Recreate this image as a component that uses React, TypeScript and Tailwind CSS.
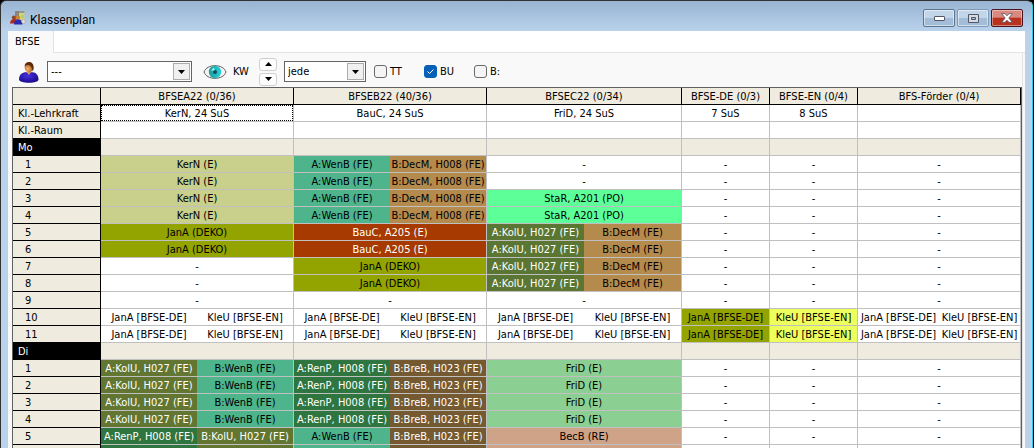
import { ReactNode } from 'react'

type Part = [text: string, color?: string]
type Cell = Part[]

const one = (text: string, color = ''): Cell => [[text, color]]

const dash = one('-')
const empty = one('')
const kern = one('KerN (E)', 'bg-[#c8d08b]')
const jana = one('JanA (DEKO)', 'bg-[#93a400]')
const bauc = one('BauC, A205 (E)', 'bg-[#a63a00] text-white')
const star = one('StaR, A201 (PO)', 'bg-[#5dff99]')
const frid = one('FriD (E)', 'bg-[#8bd092]')
const becb = one('BecB (RE)', 'bg-[#cfa388]')
const de = one('JanA [BFSE-DE]', 'bg-[#93a400]')
const en = one('KleU [BFSE-EN]', 'bg-[#ecff5d]')
const course: Cell = [['JanA [BFSE-DE]'], ['KleU [BFSE-EN]']]

const teal = 'bg-[#4db48c]'
const tan = 'bg-[#b48a4d]'
const moss = 'bg-[#5b7632] text-white'
const olive = 'bg-[#627632] text-white'
const forest = 'bg-[#2f7540] text-white'
const brown = 'bg-[#755930] text-white'

const wenDec: Cell = [['A:WenB (FE)', teal], ['B:DecM, H008 (FE)', tan]]
const kolDec: Cell = [['A:KolU, H027 (FE)', moss], ['B:DecM (FE)', tan]]
const kolWen: Cell = [['A:KolU, H027 (FE)', olive], ['B:WenB (FE)', teal]]
const renBre: Cell = [['A:RenP, H008 (FE)', forest], ['B:BreB, H023 (FE)', brown]]
const renKol: Cell = [['A:RenP, H008 (FE)', forest], ['B:KolU, H027 (FE)', olive]]
const wenBre: Cell = [['A:WenB (FE)', teal], ['B:BreB, H023 (FE)', brown]]

const classes = ['BFSEA22 (0/36)', 'BFSEB22 (40/36)', 'BFSEC22 (0/34)', 'BFSE-DE (0/3)', 'BFSE-EN (0/4)', 'BFS-Förder (0/4)']

const info: [string, Cell[]][] = [
  ['Kl.-Lehrkraft', [one('KerN, 24 SuS'), one('BauC, 24 SuS'), one('FriD, 24 SuS'), one('7 SuS'), one('8 SuS'), empty]],
  ['Kl.-Raum', [empty, empty, empty, empty, empty, empty]],
]

const days: { name: string; lessons: Cell[][] }[] = [
  {
    name: 'Mo',
    lessons: [
      [kern, wenDec, dash, dash, dash, dash],
      [kern, wenDec, dash, dash, dash, dash],
      [kern, wenDec, star, dash, dash, dash],
      [kern, wenDec, star, dash, dash, dash],
      [jana, bauc, kolDec, dash, dash, dash],
      [jana, bauc, kolDec, dash, dash, dash],
      [dash, jana, kolDec, dash, dash, dash],
      [dash, jana, kolDec, dash, dash, dash],
      [dash, dash, dash, dash, dash, dash],
      [course, course, course, de, en, course],
      [course, course, course, de, en, course],
    ],
  },
  {
    name: 'Di',
    lessons: [
      [kolWen, renBre, frid, dash, dash, dash],
      [kolWen, renBre, frid, dash, dash, dash],
      [kolWen, renBre, frid, dash, dash, dash],
      [kolWen, renBre, frid, dash, dash, dash],
      [renKol, wenBre, becb, dash, dash, dash],
    ],
  },
]

// colours only, the row that peeks out under the last lesson
const nextRow: Cell[] = [
  [['', forest], ['', olive]],
  [['', teal], ['', brown]],
  one('', 'bg-[#cfa388]'),
  empty,
  empty,
  empty,
]

function PlanCell({ cell, focused = false }: { cell: Cell; focused?: boolean }) {
  return (
    <td className="h-[17px] border-r border-b border-[#c0c0c0] bg-white p-0">
      <div className={focused ? 'flex h-4 outline-1 -outline-offset-1 outline-dotted outline-black' : 'flex h-4'}>
        {cell.map(([text, color], i) => (
          <span key={i} className={`min-w-0 flex-1 whitespace-nowrap pt-0.5 text-center leading-[14px] ${color ?? ''}`}>
            {text}
          </span>
        ))}
      </div>
    </td>
  )
}

function RowHead({ children, className = '' }: { children?: ReactNode; className?: string }) {
  return (
    <th scope="row" className={`h-[17px] border-r border-b border-black pt-0.5 text-left font-normal leading-[14px] ${className}`}>
      {children}
    </th>
  )
}

function PlanTable() {
  return (
    <table className="w-full table-fixed border-separate border-spacing-0 border-t border-l border-r border-[#606060]">
      <colgroup>
        <col className="w-[88px]" />
        <col className="w-[193px]" />
        <col className="w-[193px]" />
        <col className="w-[195px]" />
        <col className="w-[88px]" />
        <col className="w-[88px]" />
        <col className="w-[163px]" />
      </colgroup>
      <thead>
        <tr className="bg-[#efebde]">
          <td className="border-r border-b border-black p-0" />
          {classes.map((name) => (
            <th key={name} scope="col" className="h-[17px] border-r border-b border-black pt-0.5 text-center font-normal leading-[14px]">
              {name}
            </th>
          ))}
        </tr>
      </thead>
      <tbody>
        {info.map(([label, cells], row) => (
          <tr key={label}>
            <RowHead className="bg-[#efebde] pl-[5px]">{label}</RowHead>
            {cells.map((cell, i) => (
              <PlanCell key={i} cell={cell} focused={row === 0 && i === 0} />
            ))}
          </tr>
        ))}
      </tbody>
      {days.map((day) => (
        <tbody key={day.name}>
          <tr>
            <RowHead className="bg-black pl-[5px] text-white">{day.name}</RowHead>
            {classes.map((name) => (
              <td key={name} className="border-r border-b border-[#c0c0c0] bg-[#efebde] p-0" />
            ))}
          </tr>
          {day.lessons.map((cells, i) => (
            <tr key={i}>
              <RowHead className="bg-[#efebde] pl-3">{i + 1}</RowHead>
              {cells.map((cell, j) => (
                <PlanCell key={j} cell={cell} />
              ))}
            </tr>
          ))}
        </tbody>
      ))}
      <tbody>
        <tr>
          <RowHead className="bg-[#efebde]" />
          {nextRow.map((cell, i) => (
            <PlanCell key={i} cell={cell} />
          ))}
        </tr>
      </tbody>
    </table>
  )
}

function AppIcon() {
  return (
    <svg width="16" height="16" viewBox="0 0 16 16" aria-hidden="true">
      <path d="M5 1h5v11H5z" fill="#8f8577" />
      <path d="M9 1.500l5.500-.5v10H9z" fill="#d4d27c" />
      <path d="M9 1h5.500v2H9z" fill="#8a9a98" />
      <path d="M11 5h3v3h-3z" fill="#9fd86c" />
      <circle cx="3.800" cy="7.500" r="2" fill="#8a4a2a" />
      <path d="M0 13.500c0-3 2-4.500 4-4.500s4 1.500 4 4.500z" fill="#b3261c" />
      <circle cx="8" cy="7.500" r="2.100" fill="#d6822c" />
      <path d="M4 14.500c0-3.500 2-5 4.500-5s4 1.500 4 5z" fill="#2a2ab0" />
      <circle cx="13.500" cy="11.500" r="2" fill="#e4e4da" stroke="#999" strokeWidth=".6" />
    </svg>
  )
}

function PersonIcon() {
  return (
    <svg width="20" height="22" viewBox="0 0 20 22" aria-hidden="true">
      <defs>
        <radialGradient id="body" cx=".45" cy=".35" r=".65">
          <stop offset="0" stopColor="#4432e0" />
          <stop offset="1" stopColor="#1c0a8c" />
        </radialGradient>
        <radialGradient id="head" cx=".35" cy=".65" r=".7">
          <stop offset="0" stopColor="#ffb468" />
          <stop offset="1" stopColor="#8a4410" />
        </radialGradient>
      </defs>
      <path d="M0 18.500C0 14 3 11.500 6 11.200h7.500c3.500 0 6 3.600 6 7.300 0 2-4 3.200-9.500 3.200S0 20.500 0 18.500z" fill="url(#body)" />
      <path d="M7.500 11h4.500L10 14z" fill="#e89850" />
      <ellipse cx="10" cy="6.500" rx="4.300" ry="5" fill="url(#head)" />
      <path d="M5.600 5.500C5.500 2.500 7.500 1 10 1s5 1.700 4.600 6.500c-.1 1.500-.6 2.500-1 3C13.500 7 12 4.500 9.500 4 8 3.800 6.500 4.300 5.600 5.500z" fill="#5e2c0c" />
    </svg>
  )
}

function EyeIcon() {
  return (
    <svg width="24" height="16" viewBox="0 0 24 16" aria-hidden="true">
      <defs>
        <linearGradient id="iris" x1="0" y1="0" x2="1" y2="0">
          <stop offset="0" stopColor="#1a9c98" />
          <stop offset="1" stopColor="#28d0dc" />
        </linearGradient>
      </defs>
      <path d="M1 8c1.500-4.300 6-6.300 11-6.300S21.500 3.700 23 8c-1.500 4.300-6 6.300-11 6.300S2.500 12.300 1 8z" fill="#f4f4f4" stroke="#5c5c5c" />
      <circle cx="12" cy="8" r="6.200" fill="url(#iris)" />
      <circle cx="12" cy="8" r="2" fill="#0c4a60" />
      <path d="M8 6.500L11 3.500l.5 3z" fill="#b8f6ee" />
    </svg>
  )
}

function Arrow({ up = false }: { up?: boolean }) {
  return (
    <svg width="7" height="4" viewBox="0 0 7 4" aria-hidden="true">
      <path d={up ? 'M0 4h7L3.500 0z' : 'M0 0h7L3.500 4z'} fill="#000" />
    </svg>
  )
}

function Select({ label, value, className }: { label: string; value: string; className: string }) {
  return (
    <div className={`relative h-[21px] ${className}`}>
      <select aria-label={label} className="h-full w-full appearance-none border border-[#646464] bg-white pt-0.5 pl-[3px] outline-none">
        <option>{value}</option>
      </select>
      <span className="pointer-events-none absolute top-0.5 right-0.5 bottom-0.5 flex w-[17px] items-center justify-center border border-[#acacac] bg-[#f0f0f0]">
        <Arrow />
      </span>
    </div>
  )
}

function Check({ label, checked = false }: { label: string; checked?: boolean }) {
  return (
    <label className="flex w-[50px] items-center gap-[3px]">
      <span className="relative flex">
        <input
          type="checkbox"
          defaultChecked={checked}
          className="peer size-[13px] appearance-none rounded-[3px] border border-[#6a6a6a] bg-[#f5f5f5] checked:border-[#0560b6] checked:bg-[#0560b6]"
        />
        <svg className="pointer-events-none absolute inset-0 hidden peer-checked:block" width="13" height="13" viewBox="0 0 13 13" aria-hidden="true">
          <path d="M3.500 6.500l2 2 4-4" fill="none" stroke="#fff" />
        </svg>
      </span>
      <span className="pt-0.5">{label}</span>
    </label>
  )
}

function Toolbar() {
  return (
    <div className="flex h-[34px] items-center pt-[3px]">
      <span className="ml-[7px] mr-2 flex">
        <PersonIcon />
      </span>
      <Select label="Lehrkraft" value="---" className="w-[145px]" />
      <span className="ml-[11px] mr-1.5 flex">
        <EyeIcon />
      </span>
      <span className="w-[26px] pt-0.5">KW</span>
      <div className="mr-[7px] flex flex-col gap-0.5">
        <button type="button" aria-label="Woche vor" className="flex h-[13px] w-[18px] items-center justify-center rounded-[3px] border border-[#d0d0d0] bg-[#fdfdfd]">
          <Arrow up />
        </button>
        <button type="button" aria-label="Woche zurück" className="flex h-[13px] w-[18px] items-center justify-center rounded-[3px] border border-[#d0d0d0] bg-[#fdfdfd]">
          <Arrow />
        </button>
      </div>
      <Select label="Woche" value="jede" className="mr-2 w-[82px]" />
      <Check label="TT" />
      <Check label="BU" checked />
      <Check label="B:" />
    </div>
  )
}

function TitleBar() {
  const plain =
    'flex h-[18px] w-8 items-center justify-center rounded-[2px] border bg-linear-to-b from-[#c3d5e9] from-50% to-[#a3bcd8] to-50% inset-ring inset-ring-white/50'
  return (
    <header className="flex h-[30px] items-center px-0.5 pt-1">
      <AppIcon />
      <h1 className="ml-1 flex-1 pt-1 font-['Roboto','Noto_Sans',sans-serif] text-[12px] leading-4">Klassenplan</h1>
      <div className="flex gap-0.5">
        <button type="button" aria-label="Minimieren" className={`${plain} border-[#5d7690]`}>
          <svg width="11" height="5" viewBox="0 0 11 5">
            <rect x=".5" y=".5" width="10" height="4" rx=".5" fill="#fff" stroke="#535666" />
          </svg>
        </button>
        <button type="button" aria-label="Maximieren" className={`${plain} border-[#7f9ab8]`}>
          <svg width="11" height="9" viewBox="0 0 11 9">
            <path d="M.5.500h10v8H.5zM3.500 3.500v2h4v-2z" fill="#d4dae2" fillRule="evenodd" stroke="#535666" />
          </svg>
        </button>
        <button
          type="button"
          aria-label="Schließen"
          className="flex h-[18px] w-8 items-center justify-center rounded-[2px] border border-[#4a1420] bg-linear-to-b from-[#d98a80] from-45% to-[#b8321e] to-50% inset-ring inset-ring-white/40"
        >
          <svg width="12" height="10" viewBox="0 0 12 10">
            <path d="M.7.700h3.300L6 2.800 8 .7h3.300L7.800 5l3.500 4.300H8L6 7.200 4 9.300H.7L4.200 5z" fill="#fff" stroke="#535666" strokeWidth=".8" />
          </svg>
        </button>
      </div>
    </header>
  )
}

export default function App() {
  return (
    <div className="h-screen overflow-hidden bg-black pr-px font-['DejaVu_Sans_Condensed','DejaVu_Sans',sans-serif] text-[11px] text-black">
      <div className="flex min-h-full flex-col rounded-t-md border-t border-r border-l border-[#333] border-r-[#30c8e8] bg-linear-to-b from-[#98b4d2] to-[#bad2ec] to-[30px] px-[7px]">
        <TitleBar />
        <main className="flex-1 bg-[#f9f9f9]">
          <nav className="flex h-[22px] bg-white">
            <button type="button" className="w-[46px] border-r border-[#e4e4e4] bg-[#f9f9f9] pl-[7px] text-left">
              BFSE
            </button>
            <div className="flex-1 border-b border-[#e4e4e4]" />
          </nav>
          <div className="mr-0.5 border-r border-[#e4e4e4] pr-px pl-1">
            <Toolbar />
            <PlanTable />
          </div>
        </main>
      </div>
    </div>
  )
}
